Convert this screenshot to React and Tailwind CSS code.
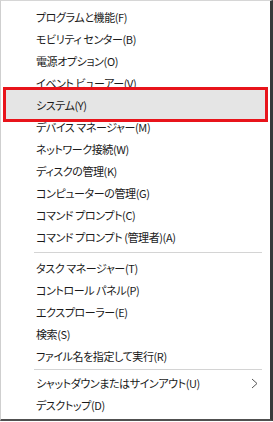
const top = [
  'プログラムと機能(F)',
  'モビリティ センター(B)',
  '電源オプション(O)',
  'イベント ビューアー(V)',
  'システム(Y)',
  'デバイス マネージャー(M)',
  'ネットワーク接続(W)',
  'ディスクの管理(K)',
  'コンピューターの管理(G)',
  'コマンド プロンプト(C)',
  'コマンド プロンプト (管理者)(A)',
];

const middle = [
  'タスク マネージャー(T)',
  'コントロール パネル(P)',
  'エクスプローラー(E)',
  '検索(S)',
  'ファイル名を指定して実行(R)',
];

function Item({ label, selected, arrow }) {
  return (
    <div className="relative flex h-[22px] items-center pl-[35px] pr-[12px]">
      {selected && (
        <div className="absolute left-[2px] right-[2px] top-[-7px] bottom-[-6px] border-[3px] border-[#e8141b] bg-[#e5e5e5]" />
      )}
      <span className="relative flex-1 whitespace-nowrap">{label}</span>
      {arrow && (
        <svg width="7" height="11" viewBox="0 0 7 11" className="relative">
          <path d="M1 1 L6 5.5 L1 10" fill="none" stroke="#555" strokeWidth="1" />
        </svg>
      )}
    </div>
  );
}

function Separator({ h }) {
  return (
    <div className={`flex items-center pl-[33px] pr-[8px] ${h}`}>
      <div className="h-px flex-1 bg-[#d4d4d4]" />
    </div>
  );
}

export default function App() {
  return (
    <div
      className="h-[422px] w-[273px] overflow-hidden bg-white text-[11px] tracking-[-0.4px] text-[#1a1a1a] [font-feature-settings:'palt']"
      style={{ fontFamily: '"Noto Sans CJK JP", "Noto Sans", sans-serif' }}
    >
      <div className="flex h-[421px] flex-col border-b-2 border-l border-r-[3px] border-t border-b-[#505050] border-l-[#cfcfcf] border-r-[#3a3a3a] border-t-[#d6d6d6] pt-[5px]">
        {top.map((t) => (
          <Item key={t} label={t} selected={t === 'システム(Y)'} />
        ))}
        <Separator h="h-[9px]" />
        {middle.map((t) => (
          <Item key={t} label={t} />
        ))}
        <Separator h="h-[5px]" />
        <Item label="シャットダウンまたはサインアウト(U)" arrow />
        <Item label="デスクトップ(D)" />
      </div>
    </div>
  );
}
